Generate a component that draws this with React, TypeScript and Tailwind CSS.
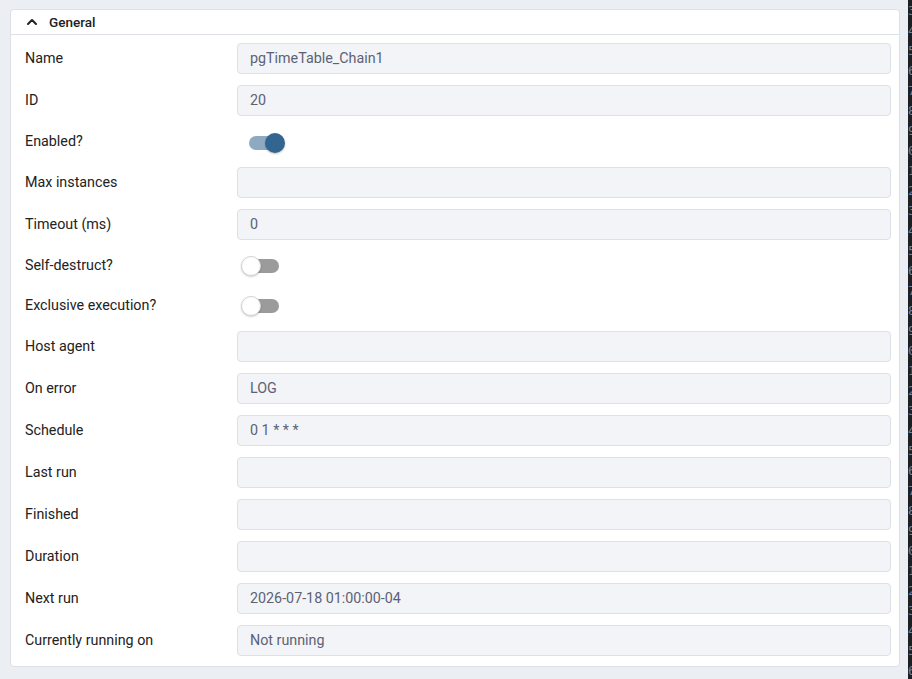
import { ChevronUp } from "lucide-react";

type Field =
  | { label: string; kind: "text"; value: string }
  | { label: string; kind: "switch"; on: boolean };

const fields: Field[] = [
  { label: "Name", kind: "text", value: "pgTimeTable_Chain1" },
  { label: "ID", kind: "text", value: "20" },
  { label: "Enabled?", kind: "switch", on: true },
  { label: "Max instances", kind: "text", value: "" },
  { label: "Timeout (ms)", kind: "text", value: "0" },
  { label: "Self-destruct?", kind: "switch", on: false },
  { label: "Exclusive execution?", kind: "switch", on: false },
  { label: "Host agent", kind: "text", value: "" },
  { label: "On error", kind: "text", value: "LOG" },
  { label: "Schedule", kind: "text", value: "0 1 * * *" },
  { label: "Last run", kind: "text", value: "" },
  { label: "Finished", kind: "text", value: "" },
  { label: "Duration", kind: "text", value: "" },
  { label: "Next run", kind: "text", value: "2026-07-18 01:00:00-04" },
  { label: "Currently running on", kind: "text", value: "Not running" },
];

function Switch({ on }: { on: boolean }) {
  return (
    <div className="relative h-[29px] w-[44px]">
      <div
        className={
          on
            ? "absolute left-[12px] top-[9px] h-[14px] w-[28px] rounded-full bg-[#8eaac3]"
            : "absolute left-[12px] top-[8px] h-[14px] w-[30px] rounded-full bg-[#9b9b9b]"
        }
      />
      <div
        className={
          on
            ? "absolute left-[28px] top-[6px] h-[20px] w-[20px] rounded-full bg-[#326690] shadow-[0_1px_2px_rgba(0,0,0,0.25)]"
            : "absolute left-[4px] top-[5px] h-[20px] w-[20px] rounded-full border border-[#d4d4d4] bg-white shadow-[0_1px_2px_rgba(0,0,0,0.2)]"
        }
      />
    </div>
  );
}

// line numbers of the editor pane peeking in at the right edge
const gutter = [3, 4, 5, 6, 7, 8, 9, 0, 1, 2, 3, 4, 5, 6, 7, 8, 9, 0, 1, 2, 3, 4, 5, 6, 7, 8, 9, 0, 1, 2, 3, 4, 5, 6, 7];

export default function App() {
  return (
    <div
      className="flex h-[679px] w-[912px] overflow-hidden bg-[#ebeef3] text-[14.3px] text-[#222222]"
      style={{ fontFamily: "Roboto, 'Liberation Sans', sans-serif" }}
    >
      <div className="flex-1 pl-[10px] pr-[8px] pt-[9px]">
        <div className="rounded-[4px] border border-[#dde1e7] bg-white">
          <div className="flex h-[25px] items-center gap-[9px] border-b border-[#dde1e7] pl-[13px] text-[13.5px] font-medium text-[#222222]">
            <ChevronUp size={16} strokeWidth={3} />
            <span>General</span>
          </div>
          <div className="flex flex-col gap-[11px] pb-[10px] pl-[14px] pr-[8px] pt-[8px]">
            {fields.map((f) => (
              <div key={f.label} className="flex items-center">
                <div className="w-[212px] shrink-0">{f.label}</div>
                {f.kind === "text" ? (
                  <div className="flex h-[31px] flex-1 items-center rounded-[4px] border border-[#dde0e6] bg-[#f3f4f7] px-[12px] text-[#5b6275]">
                    {f.value}
                  </div>
                ) : (
                  <Switch on={f.on} />
                )}
              </div>
            ))}
          </div>
        </div>
      </div>
      <div className="w-[4px] overflow-hidden bg-[#1e1f22] pt-[1px]">
        <div
          className="flex flex-col text-[13px] leading-[20px] text-[#6d8299]"
          style={{ fontFamily: "'DejaVu Sans Mono', monospace" }}
        >
          {gutter.map((d, i) => (
            <span key={i}>{d}</span>
          ))}
        </div>
      </div>
    </div>
  );
}
